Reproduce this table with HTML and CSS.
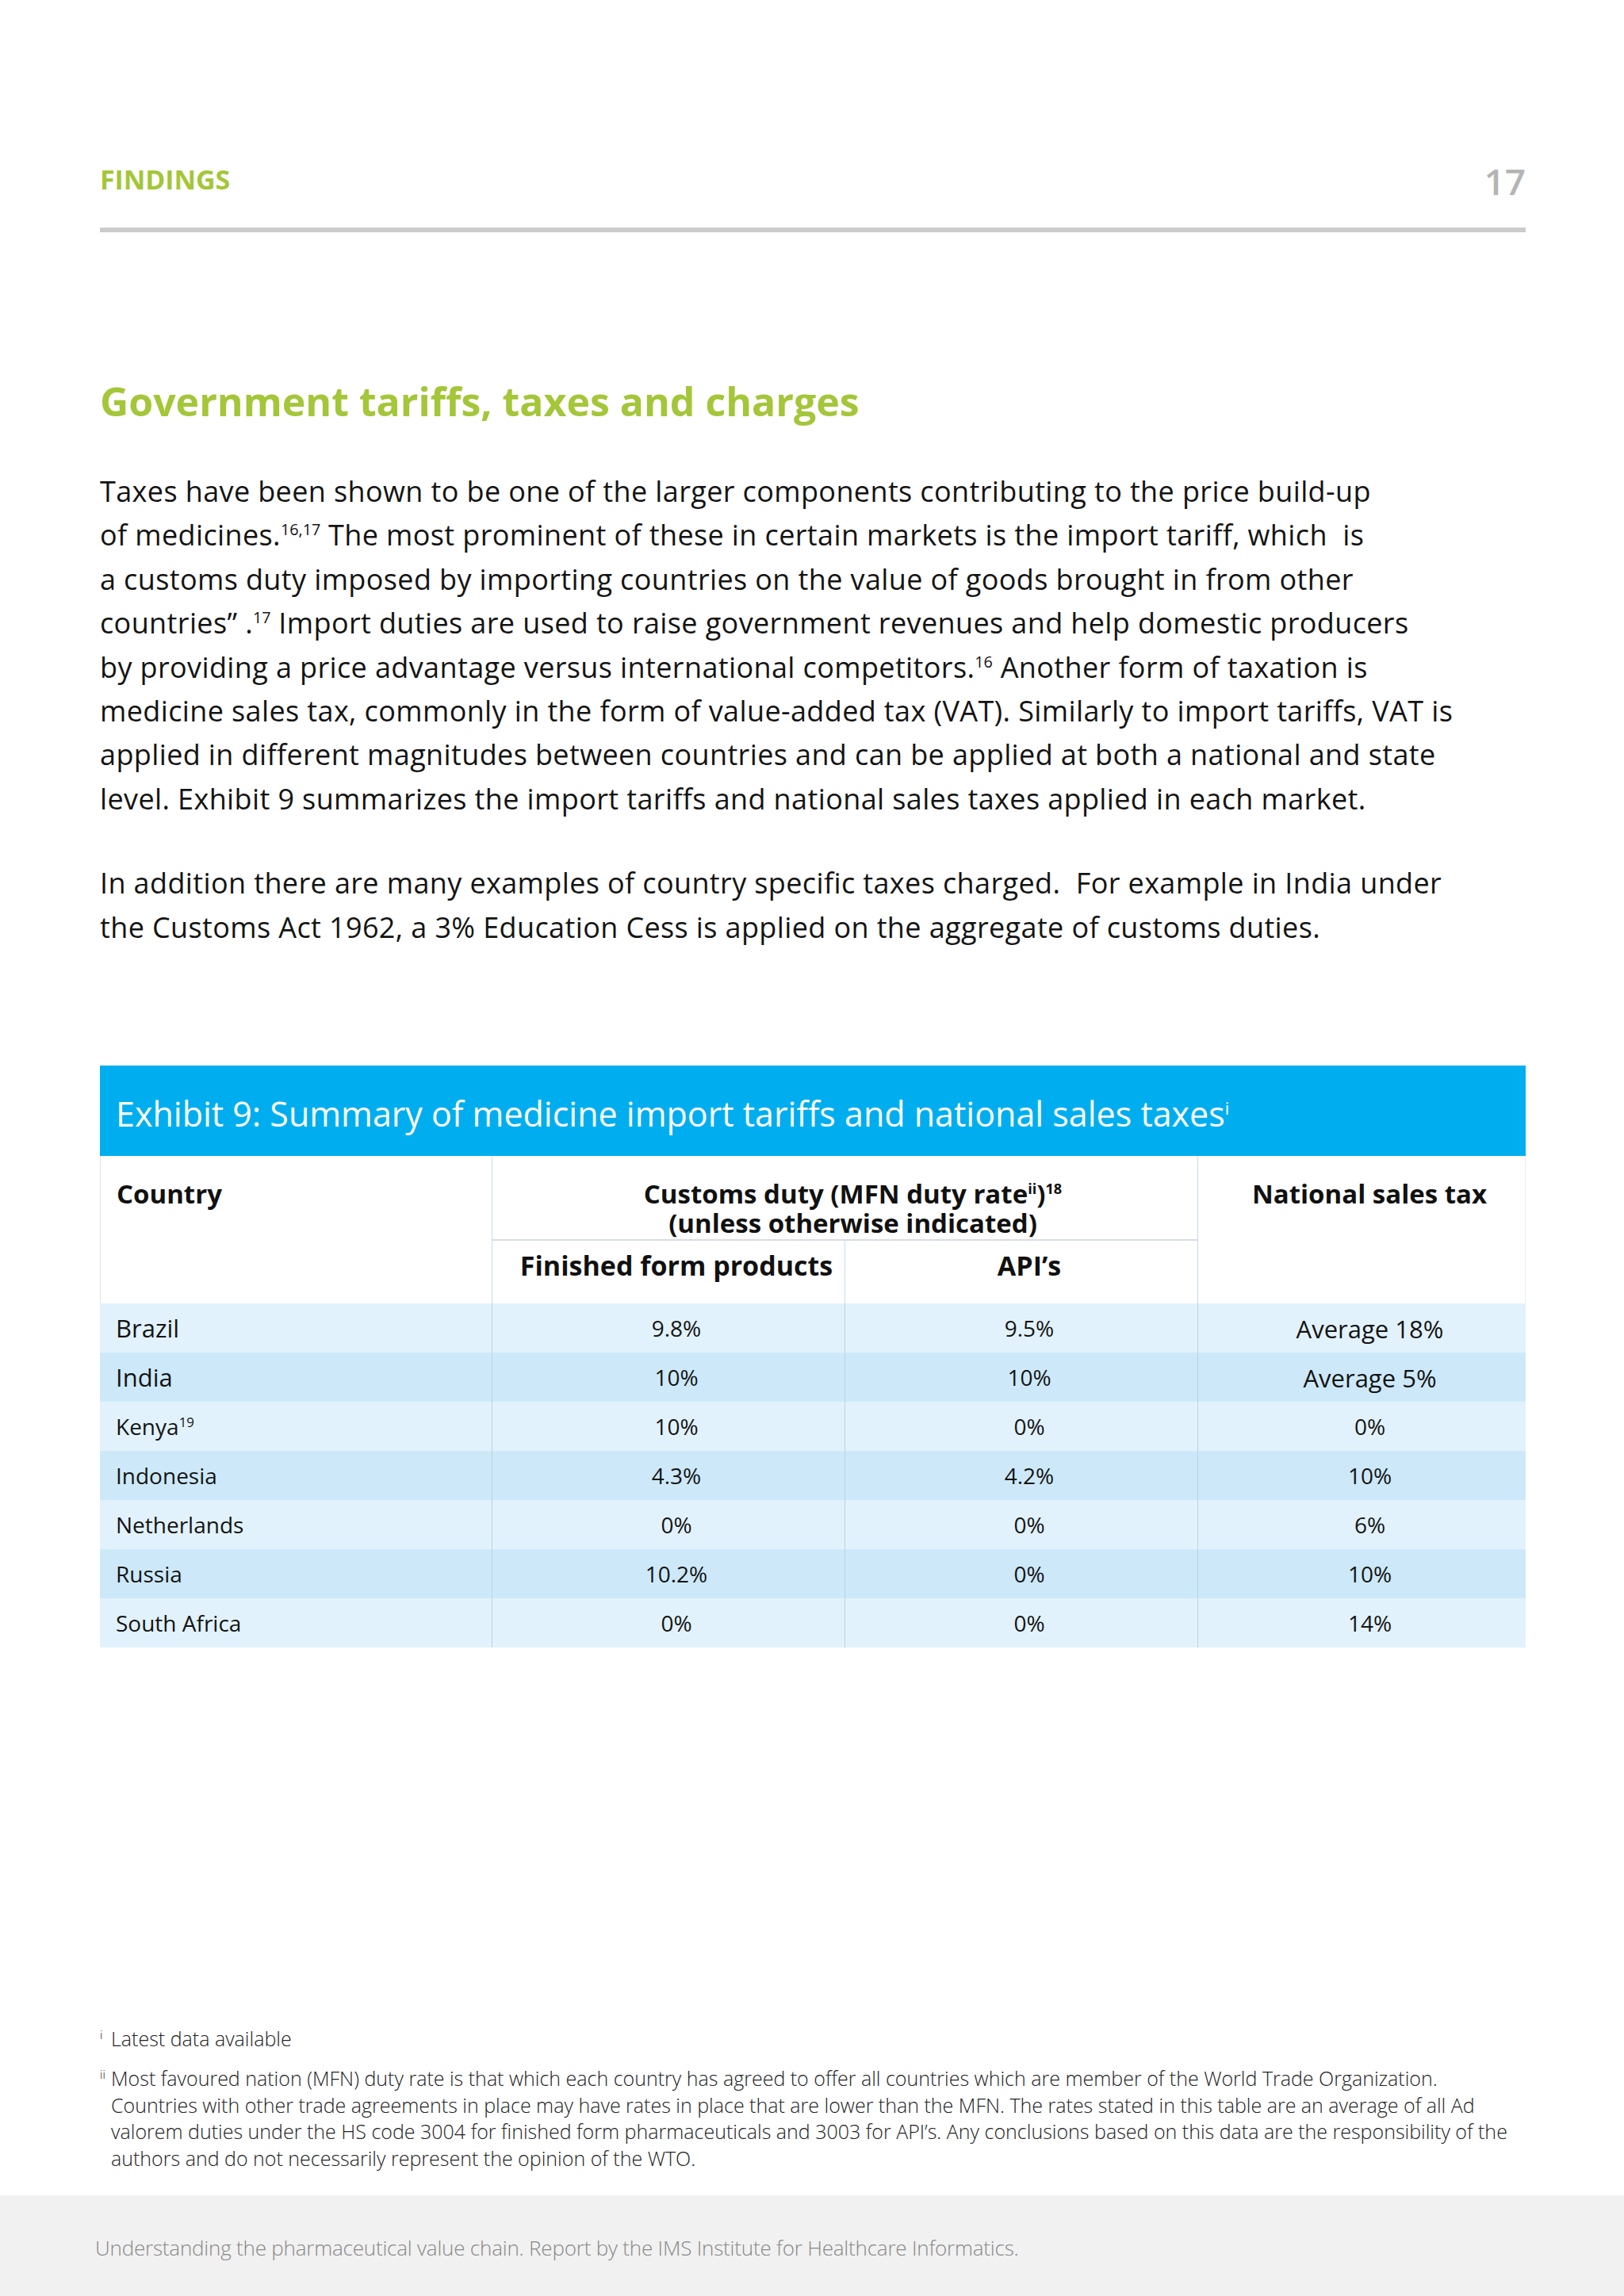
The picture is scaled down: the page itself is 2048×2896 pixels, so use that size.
FILE: index.html
```html
<!DOCTYPE html>
<html lang="en">
<head>
<meta charset="utf-8">
<title>Findings 17</title>
<link rel="stylesheet" href="styles.css">
</head>
<body>
<div class="page">
  <header class="top">
    <div class="section">FINDINGS</div>
    <div class="pageno">17</div>
  </header>
  <div class="rule"></div>

  <h1 class="title">Government tariffs, taxes and charges</h1>

  <p class="body">Taxes have been shown to be one of the larger components contributing to the price build-up<br>of medicines.<sup>16,17</sup> The most prominent of these in certain markets is the import tariff, which&nbsp; is<br>a customs duty imposed by importing countries on the value of goods brought in from other<br>countries&rdquo; .<sup>17</sup> Import duties are used to raise government revenues and help domestic producers<br>by providing a price advantage versus international competitors.<sup>16</sup> Another form of taxation is<br>medicine sales tax, commonly in the form of value-added tax (VAT). Similarly to import tariffs, VAT is<br>applied in different magnitudes between countries and can be applied at both a national and state<br>level. Exhibit 9 summarizes the import tariffs and national sales taxes applied in each market.</p>

  <p class="body second">In addition there are many examples of country specific taxes charged.&nbsp; For example in India under<br>the Customs Act 1962, a 3% Education Cess is applied on the aggregate of customs duties.</p>

  <section class="exhibit">
    <div class="exhibit-title">Exhibit 9: Summary of medicine import tariffs and national sales taxes<sup>i</sup></div>
    <div class="grid">
      <div class="hd c-country">Country</div>
      <div class="hd c-customs">Customs duty (MFN duty rate<sup>ii</sup>)<sup>18</sup><br>(unless otherwise indicated)</div>
      <div class="hd c-nat">National sales tax</div>
      <div class="hd c-fin">Finished form products</div>
      <div class="hd c-api">API&rsquo;s</div>

      <div class="cell name big odd"><span>Brazil</span></div><div class="cell num odd"><span>9.8%</span></div><div class="cell num odd"><span>9.5%</span></div><div class="cell num big odd"><span>Average 18%</span></div>
      <div class="cell name big even"><span>India</span></div><div class="cell num even"><span>10%</span></div><div class="cell num even"><span>10%</span></div><div class="cell num big even"><span>Average 5%</span></div>
      <div class="cell name odd"><span>Kenya<sup>19</sup></span></div><div class="cell num odd"><span>10%</span></div><div class="cell num odd"><span>0%</span></div><div class="cell num odd"><span>0%</span></div>
      <div class="cell name even"><span>Indonesia</span></div><div class="cell num even"><span>4.3%</span></div><div class="cell num even"><span>4.2%</span></div><div class="cell num even"><span>10%</span></div>
      <div class="cell name odd"><span>Netherlands</span></div><div class="cell num odd"><span>0%</span></div><div class="cell num odd"><span>0%</span></div><div class="cell num odd"><span>6%</span></div>
      <div class="cell name even"><span>Russia</span></div><div class="cell num even"><span>10.2%</span></div><div class="cell num even"><span>0%</span></div><div class="cell num even"><span>10%</span></div>
      <div class="cell name odd"><span>South Africa</span></div><div class="cell num odd"><span>0%</span></div><div class="cell num odd"><span>0%</span></div><div class="cell num odd"><span>14%</span></div>
    </div>
  </section>

  <div class="notes">
    <div class="note"><span class="mark">i</span><span class="ntext">Latest data available</span></div>
    <div class="note"><span class="mark">ii</span><span class="ntext">Most favoured nation (MFN) duty rate is that which each country has agreed to offer all countries which are member of the World Trade Organization.<br>Countries with other trade agreements in place may have rates in place that are lower than the MFN. The rates stated in this table are an average of all Ad<br>valorem duties under the HS code 3004 for finished form pharmaceuticals and 3003 for API&rsquo;s. Any conclusions based on this data are the responsibility of the<br>authors and do not necessarily represent the opinion of the WTO.</span></div>
  </div>
</div>
<footer class="foot">Understanding the pharmaceutical value chain. Report by the IMS Institute for Healthcare Informatics.</footer>
</body>
</html>
```

FILE: styles.css
```css
html, body {
  margin: 0;
  padding: 0;
  background: #ffffff;
}
body {
  width: 2048px;
  height: 2896px;
  font-family: "Open Sans", "Noto Sans", "DejaVu Sans", sans-serif;
  color: #141414;
  display: flex;
  flex-direction: column;
}
.page {
  padding: 0 124px 0 126px;
  flex: 1;
}
.top {
  display: flex;
  justify-content: space-between;
  align-items: flex-start;
  padding-top: 203px;
  height: 50px;
}
.section {
  margin-top: 3px;
  font-size: 34px;
  line-height: 40px;
  font-weight: 700;
  color: #a4c639;
  letter-spacing: -0.1px;
}
.pageno {
  font-size: 46px;
  line-height: 50px;
  font-weight: 600;
  color: #b4b4b4;
}
.rule {
  margin-top: 34px;
  height: 6px;
  background: #cccccc;
}
.title {
  margin: 183px 0 0;
  font-size: 50px;
  line-height: 60px;
  font-weight: 700;
  color: #a4c639;
  letter-spacing: 0;
}
.body {
  margin: 56px 0 0;
  font-size: 36px;
  line-height: 55.4px;
  letter-spacing: 0.38px;
  white-space: nowrap;
  color: #141414;
}
.body.second {
  margin-top: 51px;
}
sup {
  font-size: 0.6em;
  line-height: 0;
  vertical-align: super;
}
.body sup {
  font-size: 0.55em;
  letter-spacing: 0;
}
.exhibit {
  margin-top: 147px;
}
.exhibit-title {
  height: 114px;
  box-sizing: border-box;
  padding: 8px 0 0 20px;
  background: #00aeef;
  color: #ffffff;
  font-size: 43px;
  line-height: 106px;
  font-weight: 400;
}
.exhibit-title sup {
  font-size: 0.5em;
}
.grid {
  display: grid;
  grid-template-columns: 494px 445px 445px 414px;
  grid-template-rows: 107px 79px repeat(7, 62px);
}
.hd {
  background: #ffffff;
  font-weight: 700;
  font-size: 33px;
  line-height: 37px;
  box-sizing: border-box;
  color: #111111;
}
.hd sup {
  font-size: 0.55em;
}
.c-country {
  grid-column: 1;
  grid-row: 1 / 3;
  padding: 29px 0 0 20px;
  border-left: 1px solid #e2e2e2;
}
.c-customs {
  grid-column: 2 / 4;
  grid-row: 1;
  text-align: center;
  padding: 29px 0 0 20px;
  border-left: 1px solid #c9dbe8;
  border-bottom: 2px solid #d6dde3;
}
.c-nat {
  grid-column: 4;
  grid-row: 1 / 3;
  text-align: center;
  padding: 29px 0 0 20px;
  border-left: 1px solid #c9dbe8;
  border-right: 1px solid #ececec;
}
.c-fin {
  grid-column: 2;
  grid-row: 2;
  text-align: center;
  padding: 13px 0 0 20px;
  border-left: 1px solid #c9dbe8;
  font-size: 34px;
}
.c-api {
  grid-column: 3;
  grid-row: 2;
  text-align: center;
  padding: 13px 0 0 20px;
  border-left: 1px solid #c9dbe8;
  font-size: 34px;
}
.cell {
  display: flex;
  align-items: center;
  font-size: 28px;
  color: #141414;
  box-sizing: border-box;
}
.cell.odd { background: #e2f2fc; }
.cell.even { background: #cde9f9; }
.cell.name {
  padding-left: 20px;
}
.cell.num {
  justify-content: center;
  padding-left: 20px;
  border-left: 1px solid #b9d3e6;
}
.cell.big {
  font-size: 31px;
}
.cell.num.big {
  padding-top: 2px;
}
.cell sup {
  font-size: 0.6em;
}
.notes {
  margin-top: 477px;
  font-size: 25px;
  line-height: 33.8px;
  font-weight: 300;
  color: #222222;
  white-space: nowrap;
}
.note {
  display: flex;
  margin-bottom: 16px;
}
.mark {
  width: 14px;
  font-size: 15px;
  line-height: 22px;
  flex: none;
}
.foot {
  height: 127px;
  box-sizing: border-box;
  background: #f1f1f1;
  padding: 50px 0 0 120px;
  font-size: 26px;
  line-height: 32px;
  font-weight: 300;
  color: #888888;
  letter-spacing: -0.2px;
}
```
